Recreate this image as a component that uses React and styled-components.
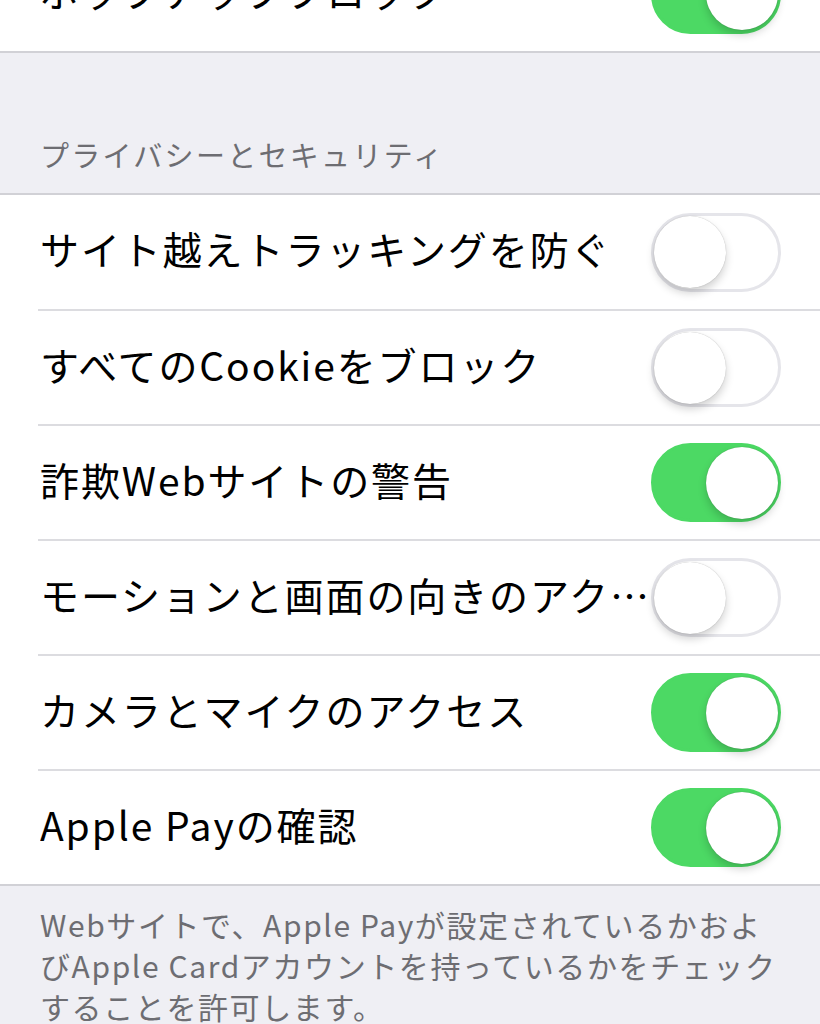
import React from 'react';
import styled, { createGlobalStyle } from 'styled-components';

const GlobalStyle = createGlobalStyle`
  html, body {
    margin: 0;
    padding: 0;
    background: #efeff4;
    font-family: "Noto Sans CJK JP", "Noto Sans", sans-serif;
    overflow: hidden;
  }
`;

const Screen = styled.div`
  width: 820px;
  height: 1024px;
  overflow: hidden;
  background: #efeff4;
`;

const Group = styled.div`
  background: #fff;
  border-top: ${({ $top }) => ($top ? '2px solid #d1d1d6' : 'none')};
  border-bottom: 2px solid #d1d1d6;
  margin-top: ${({ $offset }) => $offset || 0}px;
`;

const Row = styled.div`
  display: flex;
  align-items: center;
  height: 114px;
  padding-left: 40px;
  & + & {
    border-top: 2px solid #dcdce0;
    margin-left: 38px;
    padding-left: 2px;
    height: 113px;
  }
`;

const Label = styled.div`
  flex: 1;
  min-width: 0;
  padding-bottom: 8px;
  font-size: 39px;
  color: #000;
  white-space: nowrap;
  overflow: hidden;
  text-overflow: ellipsis;
  letter-spacing: 1.9px;
`;

const Track = styled.div`
  flex: none;
  width: 130px;
  height: 79px;
  margin-right: 39px;
  box-sizing: border-box;
  border-radius: 40px;
  background: ${({ $on }) => ($on ? '#4cd964' : '#fff')};
  border: 3px solid ${({ $on }) => ($on ? '#4cd964' : '#e5e5ea')};
  display: flex;
  align-items: center;
  justify-content: ${({ $on }) => ($on ? 'flex-end' : 'flex-start')};
`;

const Knob = styled.div`
  width: 72px;
  height: 72px;
  border-radius: 50%;
  background: #fff;
  box-shadow: 0 5px 8px rgba(0, 0, 0, 0.18), 0 0 1px rgba(0, 0, 0, 0.3);
`;

const SectionHeader = styled.div`
  height: 140px;
  box-sizing: border-box;
  display: flex;
  align-items: flex-end;
  padding: 0 40px 18px;
  font-size: 29px;
  color: #6d6d72;
  letter-spacing: 2.3px;
`;

const Footer = styled.div`
  padding: 18px 40px 0;
  font-size: 30px;
  line-height: 41px;
  color: #6d6d72;
  letter-spacing: 1.6px;
`;

const Toggle = ({ on }) => (
  <Track $on={on}>
    <Knob />
  </Track>
);

const rows = [
  { label: 'サイト越えトラッキングを防ぐ', on: false },
  { label: 'すべてのCookieをブロック', on: false },
  { label: '詐欺Webサイトの警告', on: true },
  { label: 'モーションと画面の向きのアクセス', on: false },
  { label: 'カメラとマイクのアクセス', on: true },
  { label: 'Apple Payの確認', on: true },
];

export default function App() {
  return (
    <Screen>
      <GlobalStyle />
      <Group $offset={-63}>
        <Row>
          <Label>ポップアップブロック</Label>
          <Toggle on />
        </Row>
      </Group>
      <SectionHeader>プライバシーとセキュリティ</SectionHeader>
      <Group $top>
        {rows.map((r) => (
          <Row key={r.label}>
            <Label>{r.label}</Label>
            <Toggle on={r.on} />
          </Row>
        ))}
      </Group>
      <Footer>
        Webサイトで、Apple Payが設定されているかおよびApple Cardアカウントを持っているかをチェックすることを許可します。
      </Footer>
    </Screen>
  );
}
